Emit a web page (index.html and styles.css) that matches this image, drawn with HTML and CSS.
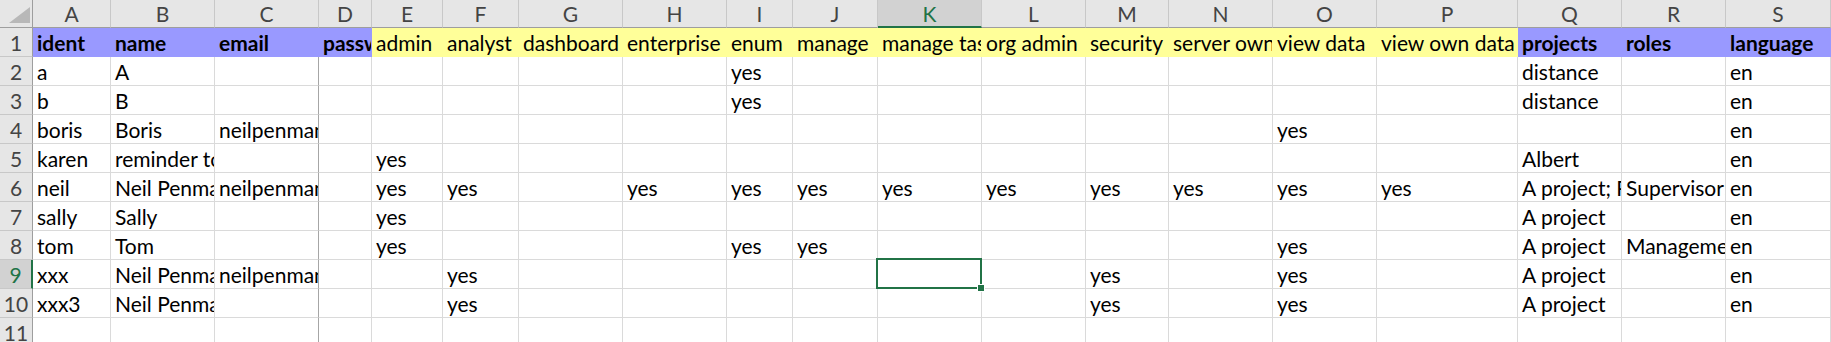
FILE: index.html
```html
<!DOCTYPE html>
<html>
<head>
<meta charset="utf-8">
<link rel="stylesheet" href="styles.css">
</head>
<body>
<div class="sheet">
  <div class="corner"><svg width="33" height="28" viewBox="0 0 33 28"><polygon points="30,7 30,23 9,23" fill="#b8b8b8"/></svg></div>
  <div class="ch">A</div><div class="ch">B</div><div class="ch">C</div><div class="ch">D</div><div class="ch">E</div><div class="ch">F</div><div class="ch">G</div><div class="ch">H</div><div class="ch">I</div><div class="ch">J</div><div class="ch ch-sel">K</div><div class="ch">L</div><div class="ch">M</div><div class="ch">N</div><div class="ch">O</div><div class="ch">P</div><div class="ch">Q</div><div class="ch">R</div><div class="ch">S</div>

  <div class="rh">1</div>
  <div class="c blue b">ident</div><div class="c blue b">name</div><div class="c blue b">email</div><div class="c blue b">password</div>
  <div class="c yel">admin</div><div class="c yel">analyst</div><div class="c yel">dashboard</div><div class="c yel">enterprise</div><div class="c yel">enum</div><div class="c yel">manage</div><div class="c yel">manage tasks</div><div class="c yel">org admin</div><div class="c yel">security</div><div class="c yel">server owner</div><div class="c yel">view data</div><div class="c yel">view own data</div>
  <div class="c blue b">projects</div><div class="c blue b">roles</div><div class="c blue b">language</div>

  <div class="rh">2</div>
  <div class="c">a</div><div class="c">A</div><div class="c edge"></div><div class="c"></div><div class="c"></div><div class="c"></div><div class="c"></div><div class="c"></div><div class="c">yes</div><div class="c"></div><div class="c"></div><div class="c"></div><div class="c"></div><div class="c"></div><div class="c"></div><div class="c"></div><div class="c">distance</div><div class="c"></div><div class="c">en</div>

  <div class="rh">3</div>
  <div class="c">b</div><div class="c">B</div><div class="c edge"></div><div class="c"></div><div class="c"></div><div class="c"></div><div class="c"></div><div class="c"></div><div class="c">yes</div><div class="c"></div><div class="c"></div><div class="c"></div><div class="c"></div><div class="c"></div><div class="c"></div><div class="c"></div><div class="c">distance</div><div class="c"></div><div class="c">en</div>

  <div class="rh">4</div>
  <div class="c">boris</div><div class="c">Boris</div><div class="c edge">neilpenman@example.com</div><div class="c"></div><div class="c"></div><div class="c"></div><div class="c"></div><div class="c"></div><div class="c"></div><div class="c"></div><div class="c"></div><div class="c"></div><div class="c"></div><div class="c"></div><div class="c">yes</div><div class="c"></div><div class="c"></div><div class="c"></div><div class="c">en</div>

  <div class="rh">5</div>
  <div class="c">karen</div><div class="c">reminder to self</div><div class="c edge"></div><div class="c"></div><div class="c">yes</div><div class="c"></div><div class="c"></div><div class="c"></div><div class="c"></div><div class="c"></div><div class="c"></div><div class="c"></div><div class="c"></div><div class="c"></div><div class="c"></div><div class="c"></div><div class="c">Albert</div><div class="c"></div><div class="c">en</div>

  <div class="rh">6</div>
  <div class="c">neil</div><div class="c">Neil Penman</div><div class="c edge">neilpenman@example.com</div><div class="c"></div><div class="c">yes</div><div class="c">yes</div><div class="c"></div><div class="c">yes</div><div class="c">yes</div><div class="c">yes</div><div class="c">yes</div><div class="c">yes</div><div class="c">yes</div><div class="c">yes</div><div class="c">yes</div><div class="c">yes</div><div class="c">A project; Project B</div><div class="c">Supervisor; Manager</div><div class="c">en</div>

  <div class="rh">7</div>
  <div class="c">sally</div><div class="c">Sally</div><div class="c edge"></div><div class="c"></div><div class="c">yes</div><div class="c"></div><div class="c"></div><div class="c"></div><div class="c"></div><div class="c"></div><div class="c"></div><div class="c"></div><div class="c"></div><div class="c"></div><div class="c"></div><div class="c"></div><div class="c">A project</div><div class="c"></div><div class="c">en</div>

  <div class="rh">8</div>
  <div class="c">tom</div><div class="c">Tom</div><div class="c edge"></div><div class="c"></div><div class="c">yes</div><div class="c"></div><div class="c"></div><div class="c"></div><div class="c">yes</div><div class="c">yes</div><div class="c"></div><div class="c"></div><div class="c"></div><div class="c"></div><div class="c">yes</div><div class="c"></div><div class="c">A project</div><div class="c">Management</div><div class="c">en</div>

  <div class="rh rh-sel">9</div>
  <div class="c">xxx</div><div class="c">Neil Penman</div><div class="c edge">neilpenman@example.com</div><div class="c"></div><div class="c"></div><div class="c">yes</div><div class="c"></div><div class="c"></div><div class="c"></div><div class="c"></div><div class="c sel"><span class="selbox"><span class="handle"></span></span></div><div class="c"></div><div class="c">yes</div><div class="c"></div><div class="c">yes</div><div class="c"></div><div class="c">A project</div><div class="c"></div><div class="c">en</div>

  <div class="rh">10</div>
  <div class="c">xxx3</div><div class="c">Neil Penman</div><div class="c edge"></div><div class="c"></div><div class="c"></div><div class="c">yes</div><div class="c"></div><div class="c"></div><div class="c"></div><div class="c"></div><div class="c"></div><div class="c"></div><div class="c">yes</div><div class="c"></div><div class="c">yes</div><div class="c"></div><div class="c">A project</div><div class="c"></div><div class="c">en</div>

  <div class="rh">11</div>
  <div class="c"></div><div class="c"></div><div class="c edge"></div><div class="c"></div><div class="c"></div><div class="c"></div><div class="c"></div><div class="c"></div><div class="c"></div><div class="c"></div><div class="c"></div><div class="c"></div><div class="c"></div><div class="c"></div><div class="c"></div><div class="c"></div><div class="c"></div><div class="c"></div><div class="c"></div>
</div>
</body>
</html>
```

FILE: styles.css
```css
html, body {
  margin: 0;
  padding: 0;
  background: #ffffff;
  overflow: hidden;
}

.sheet {
  display: grid;
  grid-template-columns: 33px 78px 104px 104px 53px 71px 76px 104px 104px 66px 85px 104px 104px 83px 104px 104px 141px 104px 104px 105px;
  grid-template-rows: 28px repeat(11, 29px);
  font-family: Lato, "Open Sans", sans-serif;
  font-size: 21px;
  color: #000;
  width: 1831px;
}

.corner {
  background: #e6e6e6;
  border-right: 1px solid #9e9e9e;
  border-bottom: 1px solid #9e9e9e;
  box-sizing: border-box;
  overflow: hidden;
}
.corner svg { display: block; }

.ch {
  box-sizing: border-box;
  background: #e6e6e6;
  border-right: 1px solid #c8c8c8;
  border-bottom: 1px solid #9e9e9e;
  color: #444;
  text-align: center;
  line-height: 27px;
  overflow: hidden;
}
.ch-sel {
  background: #d2d2d2;
  color: #217346;
  border-bottom: 2px solid #217346;
}

.rh {
  box-sizing: border-box;
  background: #e6e6e6;
  border-right: 1px solid #9e9e9e;
  border-bottom: 1px solid #c8c8c8;
  color: #444;
  text-align: center;
  line-height: 30px;
  overflow: hidden;
}
.rh-sel {
  background: #d2d2d2;
  color: #217346;
  border-right: 2px solid #217346;
}

.c {
  box-sizing: border-box;
  border-right: 1px solid #dadada;
  border-bottom: 1px solid #dadada;
  padding: 0 3px 0 4px;
  line-height: 30px;
  white-space: nowrap;
  overflow: hidden;
}
.c.edge { border-right-color: #a6a6a6; }
.c.b { font-weight: bold; }
.c.blue {
  background: #9999ff;
  border-color: #9999ff;
}
.c.yel {
  background: #ffff99;
  border-color: #ffff99;
}
.c.sel {
  position: relative;
  overflow: visible;
}
.selbox {
  position: absolute;
  left: -2px;
  top: -2px;
  right: -1px;
  bottom: -1px;
  border: 2px solid #217346;
}
.handle {
  position: absolute;
  right: -5px;
  bottom: -5px;
  width: 6px;
  height: 6px;
  background: #217346;
  border: 1px solid #fff;
}
```
